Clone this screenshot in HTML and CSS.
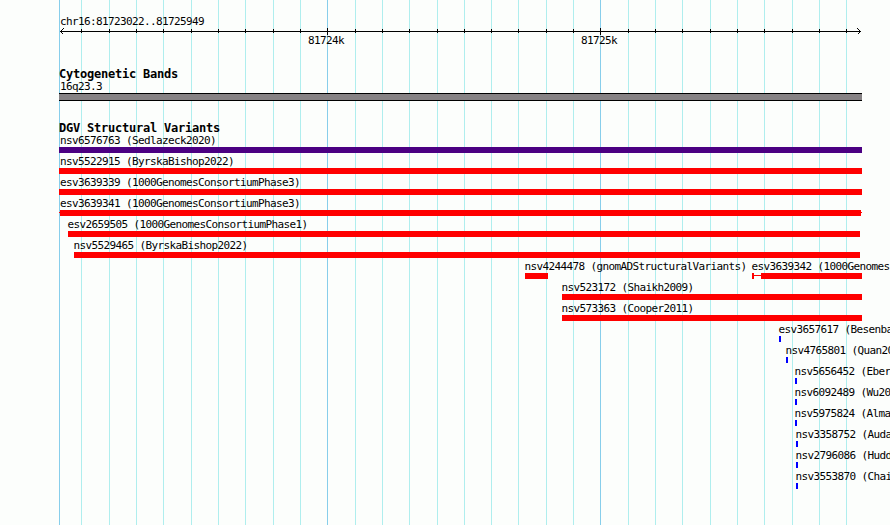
FILE: index.html
```
<!DOCTYPE html>
<html lang="en">
<head>
  <meta charset="UTF-8">
  <meta name="viewport" content="width=device-width, initial-scale=1.0">
  <title>chr16:81723022..81725949</title>
  <link rel="stylesheet" href="styles.css">
</head>
<body>
  <div class="browser">
    <!-- grid lines behind all tracks -->
    <svg class="grid" width="890" height="525" shape-rendering="crispEdges">
      <path class="minor" d="M81.5 0V525M109.5 0V525M136.5 0V525M163.5 0V525M191.5 0V525M218.5 0V525M245.5 0V525M273.5 0V525M300.5 0V525M355.5 0V525M382.5 0V525M409.5 0V525M437.5 0V525M464.5 0V525M491.5 0V525M518.5 0V525M546.5 0V525M573.5 0V525M628.5 0V525M655.5 0V525M682.5 0V525M710.5 0V525M737.5 0V525M764.5 0V525M792.5 0V525M819.5 0V525M846.5 0V525"/>
      <path class="major" d="M59.5 0V525M327.5 0V525M600.5 0V525"/>
    </svg>

    <section class="scale">
      <div class="label">chr16:81723022..81725949</div>
      <svg class="ruler" width="803" height="7" shape-rendering="crispEdges">
        <path d="M1 3.5H802M22.5 1V5M50.5 1V5M77.5 1V5M104.5 1V5M132.5 1V5M159.5 1V5M186.5 1V5M214.5 1V5M241.5 1V5M268.5 0V7M296.5 1V5M323.5 1V5M350.5 1V5M378.5 1V5M405.5 1V5M432.5 1V5M459.5 1V5M487.5 1V5M514.5 1V5M541.5 0V7M569.5 1V5M596.5 1V5M623.5 1V5M651.5 1V5M678.5 1V5M705.5 1V5M733.5 1V5M760.5 1V5M787.5 1V5"/>
        <path d="M4.5 0.5L1.5 3.5L4.5 6.5M798.5 0.5L801.5 3.5L798.5 6.5"/>
      </svg>
      <div class="ticks">
        <span>81724k</span>
        <span>81725k</span>
      </div>
    </section>

    <section class="track bands">
      <h2>Cytogenetic Bands</h2>
      <div class="label">16q23.3</div>
      <div class="band"></div>
    </section>

    <section class="track variants">
      <h2>DGV Structural Variants</h2>
      <div class="row"><div class="feature full">nsv6576763 (Sedlazeck2020)<i class="bar complex"></i></div></div>
      <div class="row"><div class="feature full">nsv5522915 (ByrskaBishop2022)<i class="bar loss"></i></div></div>
      <div class="row"><div class="feature full">esv3639339 (1000GenomesConsortiumPhase3)<i class="bar loss"></i></div></div>
      <div class="row"><div class="feature full">esv3639341 (1000GenomesConsortiumPhase3)<i class="bar ranged"></i></div></div>
      <div class="row"><div class="feature esv2659505">esv2659505 (1000GenomesConsortiumPhase1)<i class="bar loss"></i></div></div>
      <div class="row"><div class="feature nsv5529465">nsv5529465 (ByrskaBishop2022)<i class="bar loss"></i></div></div>
      <div class="row">
        <div class="feature nsv4244478">nsv4244478 (gnomADStructuralVariants)<i class="bar loss"></i></div>
        <div class="feature esv3639342">esv3639342 (1000Genomes<i class="bar left-range"></i></div>
      </div>
      <div class="row"><div class="feature mid">nsv523172 (Shaikh2009)<i class="bar loss"></i></div></div>
      <div class="row"><div class="feature mid">nsv573363 (Cooper2011)<i class="bar loss"></i></div></div>
      <div class="row"><div class="feature point esv3657617">esv3657617 (Besenba<i class="bar gain"></i></div></div>
      <div class="row"><div class="feature point nsv4765801">nsv4765801 (Quan20<i class="bar gain"></i></div></div>
      <div class="row"><div class="feature point near">nsv5656452 (Eber<i class="bar gain"></i></div></div>
      <div class="row"><div class="feature point near">nsv6092489 (Wu20<i class="bar gain"></i></div></div>
      <div class="row"><div class="feature point near">nsv5975824 (Alma<i class="bar gain"></i></div></div>
      <div class="row"><div class="feature point far">nsv3358752 (Auda<i class="bar gain"></i></div></div>
      <div class="row"><div class="feature point far">nsv2796086 (Hudd<i class="bar gain"></i></div></div>
      <div class="row"><div class="feature point far">nsv3553870 (Chai<i class="bar gain"></i></div></div>
    </section>
  </div>
</body>
</html>
```
FILE: styles.css
```
body {
  margin: 0;
  background-color: #fcfefc;
  color: #000;
  font-family: "DejaVu Sans Mono", monospace;
  font-size: 11px;
  letter-spacing: -0.622px;
}
.browser {
  position: relative;
  width: 890px;
  height: 525px;
  padding: 14px 0 0 59px;
  box-sizing: border-box;
  overflow: hidden;
}
.grid {
  position: absolute;
  top: 0;
  left: 0;
  z-index: -1;
}
.grid path,
.ruler path {
  fill: none;
  stroke: #000;
}
.grid .minor {
  stroke: #afeeee;
}
.grid .major {
  stroke: #87ceeb;
}
.scale {
  height: 54px;
}
.label {
  height: 14px;
  line-height: 16px;
  padding-left: 1px;
}
.ruler {
  display: block;
}
.ticks {
  display: flex;
  gap: 237px;
  padding-left: 249px;
  line-height: 12px;
}
.ticks span {
  width: 36px;
}
h2 {
  margin: 0;
  height: 12px;
  line-height: 13px;
  font-size: 12px;
  letter-spacing: -0.224px;
}
.bands {
  height: 54px;
}
.bands .label {
  height: 13px;
  line-height: 13px;
}
.band {
  width: 803px;
  height: 6px;
  background-color: #868284;
  border-top: 1px solid #000;
  border-bottom: 1px solid #000;
}
.variants h2 {
  height: 10px;
}
.row {
  display: flex;
  height: 21px;
}
.feature {
  flex: none;
  width: 803px;
  line-height: 17px;
  text-indent: 1px;
  white-space: nowrap;
}
.bar {
  display: block;
  height: 6px;
  margin-top: -2px;
}
/* bar colours by variant type */
.loss {
  background-color: #ff0000;
}
.gain {
  background-color: #0000ff;
}
.complex {
  background-color: #4b0082;
}
/* thin line shows the uncertain start and end */
.ranged {
  background: linear-gradient(#f00, #f00) 1px 0 / 801px 6px no-repeat,
              linear-gradient(#f00, #f00) 0 2px / 803px 1px no-repeat;
}
.left-range {
  background: linear-gradient(#f00, #f00) 0 0 / 2px 6px no-repeat,
              linear-gradient(#f00, #f00) 0 2px / 10px 1px no-repeat,
              linear-gradient(#f00, #f00) 9px 0 / 101px 6px no-repeat;
}
.esv2659505 {
  margin-left: 9px;
  width: 792px;
  text-indent: -0.5px;
}
.nsv5529465 {
  margin-left: 15px;
  width: 786px;
  text-indent: -0.5px;
}
.nsv4244478 {
  margin-left: 466px;
  width: 23px;
  text-indent: -0.5px;
}
.esv3639342 {
  margin-left: 204px;
  width: 110px;
  text-indent: -0.5px;
}
.mid {
  margin-left: 503px;
  width: 300px;
  text-indent: -0.5px;
}
.point {
  width: 2px;
  text-indent: -0.5px;
}
.esv3657617 {
  margin-left: 720px;
}
.nsv4765801 {
  margin-left: 727px;
}
.near {
  margin-left: 736px;
}
.far {
  margin-left: 737px;
}
```
